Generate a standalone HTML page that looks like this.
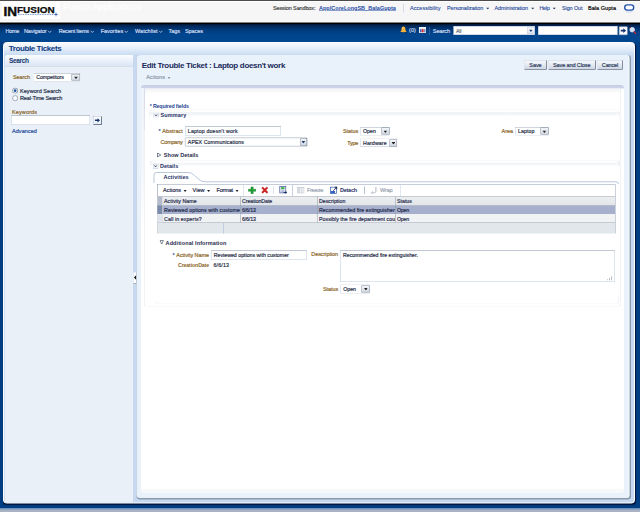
<!DOCTYPE html>
<html lang="en">
<head>
<meta charset="utf-8">
<title>Trouble Tickets</title>
<style>
html,body{margin:0;padding:0;width:640px;height:512px;overflow:hidden;background:#003d82}
#root{position:absolute;left:0;top:0;width:1280px;height:1024px;transform:scale(.5);transform-origin:0 0;overflow:hidden;font-family:"Liberation Sans",sans-serif;background:#003d82}
#root div,#root span,#root svg{position:absolute;box-sizing:border-box}
#root span{white-space:nowrap;-webkit-text-stroke:.35px currentColor}
#root span.b{font-weight:bold;-webkit-text-stroke:0}
.inp{background:#fff;border:1.2px solid #bccbdd;border-top-color:#8493a9}
.sel{background:#fff;border:1.2px solid #afbdd0;border-top-color:#7f8da3;border-radius:2px}
.ddb{background:linear-gradient(#f4f6f9,#cfd6e0);border:1px solid #7f8a9c}
.btn{background:linear-gradient(#f6f8fb,#e6ebf2 50%,#cfd6e2);border:1px solid #d3dae4;border-right:2px solid #848da0;border-bottom:2px solid #8a93a5;border-radius:2px}

</style>
</head>
<body>
<div id="root">
<div style="left:0px;top:0px;width:1280px;height:46px;background:#fff"></div>
<div style="left:0px;top:4.4px;width:1280px;height:38.6px;background:#f6f6f6"></div>
<div style="left:0px;top:0px;width:1280px;height:1.5px;background:#4c4c4c"></div>
<span style="left:126px;top:3.4px;font-size:18px;line-height:22px;color:#ffffff;letter-spacing:0.05px;">Fusion Applications</span>
<div style="left:4px;top:4.4px;width:116px;height:33.2px;background:#fff"></div>
<span class="b" style="left:7px;top:10.9px;font-size:24px;line-height:24px;color:#0c0c0c;-webkit-text-stroke:.8px #0c0c0c;transform:scaleX(1.13);transform-origin:0 0">IN</span>
<span class="b" style="left:34.4px;top:11.8px;font-size:17px;line-height:17px;color:#0c0c0c;-webkit-text-stroke:.5px #0c0c0c;transform:scaleX(1.17);transform-origin:0 0">FUSION</span>
<svg style="left:36px;top:24.4px" width="84" height="10" viewBox="0 0 84 10"><line x1="0" y1="5" x2="72" y2="5" stroke="#5b86c4" stroke-width="1.8" stroke-dasharray="1.8 1.6"/><path d="M76 -1 L77 3.8 L81 5 L77 6.2 L76 10 L75 6.2 L71 5 L75 3.8Z" fill="#2c5fa8"/></svg>
<span style="left:546px;top:9.8px;font-size:11px;line-height:13px;color:#444;letter-spacing:-0.25px;">Session Sandbox:</span>
<span class="b" style="left:638px;top:9.8px;font-size:11px;line-height:13px;color:#1d49a3;letter-spacing:0.04px;text-decoration:underline">ApplCoreLongSB_BalaGupta</span>
<div style="left:806px;top:8px;width:1.2px;height:16.8px;background:#b4bfd8"></div>
<span style="left:820px;top:9.8px;font-size:11px;line-height:13px;color:#23479a;letter-spacing:0.08px;-webkit-text-stroke-width:.2px">Accessibility</span>
<span style="left:894px;top:9.8px;font-size:11px;line-height:13px;color:#23479a;letter-spacing:-0.20px;-webkit-text-stroke-width:.2px">Personalization</span>
<span style="left:989px;top:9.8px;font-size:11px;line-height:13px;color:#23479a;letter-spacing:-0.21px;-webkit-text-stroke-width:.2px">Administration</span>
<span style="left:1079px;top:9.8px;font-size:11px;line-height:13px;color:#23479a;letter-spacing:-0.75px;-webkit-text-stroke-width:.2px">Help</span>
<span style="left:1124px;top:9.8px;font-size:11px;line-height:13px;color:#23479a;letter-spacing:-0.25px;-webkit-text-stroke-width:.2px">Sign Out</span>
<span style="left:1176px;top:9.8px;font-size:11px;line-height:13px;color:#000;letter-spacing:0.10px;">Bala Gupta</span>
<svg style="left:972px;top:15.2px" width="7" height="4" viewBox="0 0 7 4"><path d="M0 0H7L3.5 4Z" fill="#2c3f66"/></svg>
<svg style="left:1062px;top:15.2px" width="7" height="4" viewBox="0 0 7 4"><path d="M0 0H7L3.5 4Z" fill="#2c3f66"/></svg>
<svg style="left:1105px;top:15.2px" width="7" height="4" viewBox="0 0 7 4"><path d="M0 0H7L3.5 4Z" fill="#2c3f66"/></svg>
<svg style="left:1246px;top:6.4px" width="26" height="22" viewBox="0 0 26 22"><rect x="1" y="1" width="22.8" height="16" rx="8" fill="#fbfbfb"/><rect x="3.4" y="3.8" width="18" height="10.4" rx="5.2" ry="5.2" fill="#fff" stroke="#1f4fae" stroke-width="2.7"/><path d="M6 17.2Q12.4 19.6 18.8 17.2" fill="none" stroke="#b9cdea" stroke-width="1.6"/></svg>
<div style="left:0px;top:45.2px;width:1280px;height:4.8px;background:linear-gradient(#000 0,#000 45%,#001b40 100%)"></div>
<div style="left:0px;top:48.6px;width:1280px;height:35.4px;background:linear-gradient(#001f49 0,#003a7c 30%,#00468f 60%,#00468f 100%)"></div>
<span style="left:11px;top:55.5px;font-size:11px;line-height:13px;color:#d3dff2;letter-spacing:-0.50px;">Home</span>
<span style="left:48px;top:55.5px;font-size:11px;line-height:13px;color:#d3dff2;letter-spacing:-0.22px;">Navigator</span>
<svg style="left:95.4px;top:59px" width="9" height="9" viewBox="0 0 9 9"><path d="M1.2 2.6L4.5 6L7.8 2.6" fill="none" stroke="#cfdcf0" stroke-width="1.5"/></svg>
<span style="left:117.4px;top:55.5px;font-size:11px;line-height:13px;color:#d3dff2;letter-spacing:-0.37px;">Recent Items</span>
<svg style="left:180.4px;top:59px" width="9" height="9" viewBox="0 0 9 9"><path d="M1.2 2.6L4.5 6L7.8 2.6" fill="none" stroke="#cfdcf0" stroke-width="1.5"/></svg>
<span style="left:201.4px;top:55.5px;font-size:11px;line-height:13px;color:#d3dff2;letter-spacing:-0.04px;">Favorites</span>
<svg style="left:248px;top:59px" width="9" height="9" viewBox="0 0 9 9"><path d="M1.2 2.6L4.5 6L7.8 2.6" fill="none" stroke="#cfdcf0" stroke-width="1.5"/></svg>
<span style="left:270px;top:55.5px;font-size:11px;line-height:13px;color:#d3dff2;letter-spacing:0.11px;">Watchlist</span>
<svg style="left:316.8px;top:59px" width="9" height="9" viewBox="0 0 9 9"><path d="M1.2 2.6L4.5 6L7.8 2.6" fill="none" stroke="#cfdcf0" stroke-width="1.5"/></svg>
<span style="left:336.8px;top:55.5px;font-size:11px;line-height:13px;color:#d3dff2;letter-spacing:0.05px;">Tags</span>
<span style="left:370px;top:55.5px;font-size:11px;line-height:13px;color:#d3dff2;letter-spacing:-0.17px;">Spaces</span>
<svg style="left:798.6px;top:52.4px" width="16.8" height="16.8" viewBox="0 0 16.8 16.8"><path d="M8 1C5.2 1 4.2 3.4 4.2 6C4.2 9 3 10.6 1.2 12.2H14.8C13 10.6 11.8 9 11.8 6C11.8 3.4 10.8 1 8 1Z" fill="#f8b23a"/><path d="M6.4 12.6a1.7 1.7 0 0 0 3.2 0Z" fill="#e58d0a"/><path d="M7 2.2C5.8 2.8 5.4 4.6 5.4 6.4" stroke="#fde2a4" stroke-width="1.2" fill="none"/></svg>
<span style="left:818px;top:53.3px;font-size:10.5px;line-height:13px;color:#d3dff2;letter-spacing:0.33px;">(0)</span>
<svg style="left:838px;top:54px" width="14.4" height="12.4" viewBox="0 0 14.4 12.4"><rect x="0" y="0" width="14.4" height="12.4" fill="#dfe5ee"/><rect x="0.6" y="0.6" width="13.2" height="2.6" fill="#f4f6fa"/><rect x="2" y="4.4" width="3" height="6" fill="#3f63b4"/><rect x="5.6" y="4.4" width="3.6" height="6" fill="#e0262d"/><rect x="9.8" y="4.4" width="3" height="6" fill="#7f90b8"/></svg>
<div style="left:858.6px;top:54px;width:1.2px;height:16px;background:#4f7fbd"></div>
<span style="left:865.5px;top:55.0px;font-size:11.5px;line-height:14px;color:#d3dff2;letter-spacing:-0.33px;">Search</span>
<div style="left:907px;top:52px;width:163.4px;height:17.8px;background:#fff;border:1px solid #9fb0c8"></div>
<span style="left:912px;top:54.7px;font-size:10.5px;line-height:13px;color:#666e7c;letter-spacing:-0.33px;">All</span>
<div style="left:1054px;top:54.8px;width:14.6px;height:13px;background:linear-gradient(#fbfcfe,#d5dfee);border:1px solid #b9c6da"></div>
<svg style="left:1057.6px;top:59.2px" width="7.6" height="4.8" viewBox="0 0 7.6 4.8"><path d="M0 0H7.6L3.8 4.8Z" fill="#1f3a72"/></svg>
<div style="left:1076.4px;top:52.4px;width:158.2px;height:17.4px;background:#fff;border:1px solid #9fb0c8"></div>
<div style="left:1238px;top:53.4px;width:16.8px;height:16.4px;background:#fff;border:1px solid #aab6c8;border-radius:1px"></div>
<svg style="left:1240.8px;top:56.4px" width="11.6" height="10.4" viewBox="0 0 11.6 10.4"><path d="M0 3.6H5.6V0.6L11.2 5.2L5.6 9.8V6.8H0Z" fill="#15346f"/></svg>
<svg style="left:1258px;top:53.2px" width="15.2" height="16" viewBox="0 0 15.2 16"><circle cx="6.4" cy="6.4" r="4.6" fill="#cfe4f7" stroke="#e8eef6" stroke-width="1.6"/><path d="M9.4 9.6L14 15" stroke="#c8242a" stroke-width="2.4"/><path d="M1 1l3 1.5" stroke="#c8242a" stroke-width="1.6"/></svg>
<div style="left:0px;top:1016.8px;width:1280px;height:2.4px;background:#dde4ee"></div>
<div style="left:0px;top:1019px;width:1280px;height:5px;background:#a9b3c3"></div>
<div style="left:5.6px;top:83.6px;width:1264.8px;height:923.4px;background:#c6d9f0;border:2.6px solid #fff;border-radius:7px;box-shadow:1.6px 2.4px 1.5px #00163c"></div>
<div style="left:8px;top:86px;width:1260px;height:24.4px;background:linear-gradient(#f7fafd 0,#e6eef9 45%,#c9dcf2 100%);border-radius:5px 5px 0 0"></div>
<span class="b" style="left:17.4px;top:86.9px;font-size:16px;line-height:19px;color:#0b377f;letter-spacing:-0.80px;">Trouble Tickets</span>
<div style="left:8.8px;top:110px;width:258px;height:894.6px;background:#e9f0f8;border-left:1.6px solid #c4d5ec;border-right:1px solid #b9c7da;border-radius:5px 0 0 3px"></div>
<div style="left:10.4px;top:110px;width:256px;height:22.8px;background:linear-gradient(#fbfdff 0,#eaf1fa 50%,#dbe7f5 100%);border-bottom:1.8px solid #a3aebf;border-radius:5px 0 0 0"></div>
<span class="b" style="left:18px;top:112.8px;font-size:13px;line-height:16px;color:#14366f;letter-spacing:-0.73px;">Search</span>
<span style="left:26px;top:148.1px;font-size:11px;line-height:13px;color:#8b6426;letter-spacing:-0.17px;">Search</span>
<div class="sel" style="left:66.6px;top:146.4px;width:94.6px;height:16.4px;"></div>
<span style="left:72.4px;top:148.1px;font-size:10.5px;line-height:13px;color:#222c44;letter-spacing:-0.13px;">Competitors</span>
<div class="ddb" style="left:142.6px;top:148px;width:17.4px;height:13.4px;"></div>
<svg style="left:147.6px;top:152.8px" width="8" height="5.2" viewBox="0 0 8 5.2"><path d="M0 0H8L4 5.2Z" fill="#222"/></svg>
<svg style="left:23.6px;top:174.6px" width="12.8" height="12.8" viewBox="0 0 12.8 12.8"><circle cx="6.4" cy="6.4" r="5.2" fill="#f4f7fb" stroke="#7d899d" stroke-width="1.6"/><circle cx="6.4" cy="6.4" r="2.7" fill="#1f55a8"/></svg>
<svg style="left:23.6px;top:190.4px" width="12.8" height="12.8" viewBox="0 0 12.8 12.8"><circle cx="6.4" cy="6.4" r="5.2" fill="#fafbfd" stroke="#8f9aad" stroke-width="1.6"/></svg>
<span style="left:40px;top:174.5px;font-size:11px;line-height:13px;color:#222c44;letter-spacing:0.11px;">Keyword Search</span>
<span style="left:40px;top:190.3px;font-size:11px;line-height:13px;color:#222c44;letter-spacing:-0.25px;">Real-Time Search</span>
<span style="left:24px;top:216.9px;font-size:11px;line-height:13px;color:#8b6426;letter-spacing:0.25px;">Keywords</span>
<div class="inp" style="left:22.4px;top:231.2px;width:157.6px;height:17.6px;"></div>
<div class="btn" style="left:186px;top:232.2px;width:18px;height:17.8px;border-radius:2px;background:linear-gradient(#fdfeff,#e6edf6);border-color:#aab6c8;border-right-color:#6f7c92;border-bottom-color:#6f7c92"></div>
<svg style="left:189.6px;top:236.4px" width="10.4" height="9.2" viewBox="0 0 10.4 9.2"><path d="M0 3.2H5V0.4L10.2 4.6L5 8.8V6H0Z" fill="#15346f"/></svg>
<span style="left:24px;top:255.9px;font-size:11px;line-height:13px;color:#1d4a98;letter-spacing:0.12px;">Advanced</span>
<div style="left:267.2px;top:544.8px;width:6.8px;height:22px;background:#fff;border-right:1.6px solid #4a4f5a;border-bottom:1.4px solid #6b7280"></div>
<svg style="left:268px;top:550.4px" width="4.8" height="10" viewBox="0 0 4.8 10"><path d="M4.6 0V10L0 5Z" fill="#111"/></svg>
<div style="left:272.6px;top:110.4px;width:989.4px;height:888.4px;background:#8b9aab;border-radius:7px"></div>
<div style="left:272.6px;top:110.4px;width:986px;height:885.6px;background:#e9f1fa;border-radius:7px 6px 6px 7px;box-shadow:inset -2px 0 0 #f3fbfc"></div>
<span class="b" style="left:283.4px;top:120.1px;font-size:16px;line-height:19px;color:#1b2a5c;letter-spacing:-0.64px;">Edit Trouble Ticket : Laptop doesn&#39;t work</span>
<span style="left:292.6px;top:148.3px;font-size:11px;line-height:13px;color:#8c97a8;letter-spacing:0.20px;">Actions</span>
<svg style="left:334.8px;top:153.6px" width="6.4" height="4" viewBox="0 0 6.4 4"><path d="M0 0H6.4L3.2 4Z" fill="#8c97a8"/></svg>
<div class="btn" style="left:1048.4px;top:119.6px;width:45.6px;height:20.4px;"></div>
<span style="left:1058.6px;top:122.9px;font-size:11px;line-height:13px;color:#27365a;letter-spacing:-0.10px;">Save</span>
<div class="btn" style="left:1096px;top:119.6px;width:96px;height:20.4px;"></div>
<span style="left:1106px;top:122.9px;font-size:11px;line-height:13px;color:#27365a;letter-spacing:-0.21px;">Save and Close</span>
<div class="btn" style="left:1193.6px;top:119.6px;width:52.4px;height:20.4px;"></div>
<span style="left:1203.6px;top:122.9px;font-size:11px;line-height:13px;color:#27365a;letter-spacing:-0.27px;">Cancel</span>
<div style="left:282px;top:170px;width:965.6px;height:815.2px;background:#fff;border-radius:6px"></div>
<div style="left:282px;top:170px;width:965.6px;height:8.8px;background:linear-gradient(#c5cee3 0,#cbd4e7 60%,#eef1f7 85%,#fff 100%);border-radius:6px 6px 0 0"></div>
<div style="left:282px;top:176px;width:6.8px;height:284px;background:linear-gradient(#eff4fa,#f3f6fb 60%,#fff)"></div>
<div style="left:288.4px;top:176.8px;width:953.4px;height:436.4px;background:linear-gradient(#f2f3f5 0,#f7f7f8 4px,#fff 11px);border:1px solid #e3e7ed;border-top:none;border-radius:0 0 5px 5px"></div>
<div style="left:288.4px;top:176.8px;width:1.6px;height:83.2px;background:linear-gradient(#d6daeb,#e3e7ed)"></div>
<div style="left:282px;top:978.4px;width:965.6px;height:6.8px;background:#f7f8f9;border-radius:0 0 6px 6px"></div>
<span class="b" style="left:299.4px;top:205.9px;font-size:10.5px;line-height:13px;color:#1f3f92;letter-spacing:-0.28px;">* Required fields</span>
<div style="left:298.6px;top:218.8px;width:941px;height:25.2px;border:1px solid transparent;border-top:1.8px solid #bccadd;border-radius:6px 6px 0 0"></div>
<div style="left:298.6px;top:223px;width:1px;height:19px;background:linear-gradient(#d5dde9,#fff)"></div>
<div style="left:1238.6px;top:223px;width:1px;height:19px;background:linear-gradient(#d5dde9,#fff)"></div>
<div style="left:299.6px;top:220px;width:940px;height:12px;background:linear-gradient(#fff 0,#fff 25%,#f1f3f6 40%,#f4f6f8 80%,#fff 100%);border-radius:6px 6px 0 0"></div>
<div style="left:306.2px;top:224.8px;width:11.4px;height:10.4px;background:#eef1f6;border:1.2px solid #bcc6d5;border-right-color:#939eb2;border-bottom-color:#939eb2;border-radius:1.5px"></div>
<svg style="left:308.6px;top:227.6px" width="6.4" height="5" viewBox="0 0 6.4 5"><path d="M0.6 0.8L3.2 3.8L5.8 0.8" fill="none" stroke="#2c3650" stroke-width="1.7"/></svg>
<span class="b" style="left:321.2px;top:223.5px;font-size:11px;line-height:13px;color:#1a3068;letter-spacing:0.20px;">Summary</span>
<span class="b" style="left:316.8px;top:256.3px;font-size:11px;line-height:13px;color:#2a4fa8;letter-spacing:0.40px;">*</span>
<span style="left:324.6px;top:255.5px;font-size:11px;line-height:13px;color:#8b6426;letter-spacing:0.12px;">Abstract</span>
<div class="inp" style="left:370px;top:252.6px;width:191.8px;height:18.4px;"></div>
<span style="left:375.6px;top:255.5px;font-size:10.5px;line-height:13px;color:#222c44;letter-spacing:0.32px;">Laptop doesn&#39;t work</span>
<span style="left:321.2px;top:277.9px;font-size:11px;line-height:13px;color:#8b6426;letter-spacing:-0.46px;">Company</span>
<div class="sel" style="left:370px;top:274.8px;width:244.8px;height:18.4px;border-color:#8e9aac"></div>
<span style="left:375.6px;top:277.9px;font-size:10.5px;line-height:13px;color:#222c44;letter-spacing:0.18px;">APEX Communications</span>
<div class="ddb" style="left:600.6px;top:276.4px;width:13px;height:15.2px;"></div>
<svg style="left:603.4px;top:281.6px" width="7.6" height="5.2" viewBox="0 0 7.6 5.2"><path d="M0 0H7.6L3.8 5.2Z" fill="#1f3a72"/></svg>
<span style="left:685.8px;top:255.9px;font-size:11px;line-height:13px;color:#8b6426;letter-spacing:-0.07px;">Status</span>
<div class="sel" style="left:720px;top:253.8px;width:59.6px;height:16.8px;"></div>
<span style="left:726px;top:255.9px;font-size:10.5px;line-height:13px;color:#222c44;letter-spacing:0.00px;">Open</span>
<div class="ddb" style="left:763px;top:255.4px;width:15.6px;height:13.8px;"></div>
<svg style="left:767.2px;top:260.8px" width="7.6" height="4.8" viewBox="0 0 7.6 4.8"><path d="M0 0H7.6L3.8 4.8Z" fill="#222"/></svg>
<span style="left:694.6px;top:279.5px;font-size:11px;line-height:13px;color:#8b6426;letter-spacing:-0.55px;">Type</span>
<div class="sel" style="left:720px;top:277.4px;width:75.2px;height:16.6px;"></div>
<span style="left:726px;top:279.5px;font-size:10.5px;line-height:13px;color:#222c44;letter-spacing:0.25px;">Hardware</span>
<div class="ddb" style="left:778.8px;top:279px;width:15.4px;height:13.6px;"></div>
<svg style="left:782.8px;top:284.4px" width="7.6" height="4.8" viewBox="0 0 7.6 4.8"><path d="M0 0H7.6L3.8 4.8Z" fill="#222"/></svg>
<span style="left:1003.2px;top:255.9px;font-size:11px;line-height:13px;color:#8b6426;letter-spacing:-0.05px;">Area</span>
<div class="sel" style="left:1030px;top:253.8px;width:67.8px;height:16.8px;"></div>
<span style="left:1036px;top:255.9px;font-size:10.5px;line-height:13px;color:#222c44;letter-spacing:0.13px;">Laptop</span>
<div class="ddb" style="left:1081.2px;top:255.4px;width:15.6px;height:13.8px;"></div>
<svg style="left:1085.2px;top:260.8px" width="7.6" height="4.8" viewBox="0 0 7.6 4.8"><path d="M0 0H7.6L3.8 4.8Z" fill="#222"/></svg>
<svg style="left:314.4px;top:304.8px" width="8.8" height="10" viewBox="0 0 8.8 10"><path d="M1 1L7.6 5L1 9Z" fill="#fff" stroke="#333c52" stroke-width="1.3"/></svg>
<span class="b" style="left:327.6px;top:303.1px;font-size:11px;line-height:13px;color:#1f2a4c;letter-spacing:0.07px;">Show Details</span>
<div style="left:299.6px;top:320.6px;width:940px;height:11.4px;background:linear-gradient(#fff 0,#fff 25%,#f1f3f6 45%,#f4f6f8 80%,#fff 100%);border-top:1.8px solid #bccadd;border-right:1px solid #dde4ee;border-radius:6px 6px 0 0"></div>
<div style="left:306px;top:327.6px;width:11.4px;height:10.4px;background:#eef1f6;border:1.2px solid #bcc6d5;border-right-color:#939eb2;border-bottom-color:#939eb2;border-radius:1.5px"></div>
<svg style="left:308.4px;top:330.4px" width="6.4" height="5" viewBox="0 0 6.4 5"><path d="M0.6 0.8L3.2 3.8L5.8 0.8" fill="none" stroke="#2c3650" stroke-width="1.7"/></svg>
<span class="b" style="left:320px;top:325.9px;font-size:11px;line-height:13px;color:#1a3068;letter-spacing:0.06px;">Details</span>
<svg style="left:306px;top:342px" width="934" height="26" viewBox="0 0 934 26"><path d="M2 24V8Q2 3 7 3H70Q78 3 83 9L92 17Q97 21.6 104 21.6H926Q931 21.6 931 26" fill="none" stroke="#b9c7db" stroke-width="2"/></svg>
<span class="b" style="left:326.8px;top:348.3px;font-size:11px;line-height:13px;color:#1a3068;letter-spacing:0.18px;">Activities</span>
<div style="left:314px;top:368.4px;width:917.2px;height:98.8px;background:#fff;border:1.2px solid #79859a;border-top-color:#8f9aae;border-bottom:none;border-right-color:#98a3b4"></div>
<div style="left:315.2px;top:444.8px;width:914.8px;height:22.4px;background:#e1e7ea"></div>
<div style="left:315.2px;top:444.4px;width:914.8px;height:1.2px;background:#9aa3b0"></div>
<div style="left:445.6px;top:445.6px;width:1.2px;height:21.2px;background:#9db4dc"></div>
<span style="left:326px;top:373.9px;font-size:11px;line-height:13px;color:#1f2a4c;letter-spacing:0.00px;">Actions</span>
<span style="left:385px;top:373.9px;font-size:11px;line-height:13px;color:#1f2a4c;letter-spacing:0.15px;">View</span>
<span style="left:433px;top:373.9px;font-size:11px;line-height:13px;color:#1f2a4c;letter-spacing:-0.33px;">Format</span>
<svg style="left:367.2px;top:379.6px" width="6.4" height="4" viewBox="0 0 6.4 4"><path d="M0 0H6.4L3.2 4Z" fill="#222"/></svg>
<svg style="left:414.4px;top:379.6px" width="6.4" height="4" viewBox="0 0 6.4 4"><path d="M0 0H6.4L3.2 4Z" fill="#222"/></svg>
<svg style="left:470.8px;top:379.6px" width="6.4" height="4" viewBox="0 0 6.4 4"><path d="M0 0H6.4L3.2 4Z" fill="#222"/></svg>
<div style="left:487px;top:370px;width:1.2px;height:22px;background:#c5cfe0"></div>
<div style="left:545.6px;top:373.2px;width:1.2px;height:14.8px;background:#b5bfd0"></div>
<div style="left:584.4px;top:370px;width:1.2px;height:22px;background:#c5cfe0"></div>
<div style="left:728.4px;top:373.2px;width:1.2px;height:14.8px;background:#b5bfd0"></div>
<div style="left:800px;top:369.2px;width:1.2px;height:22.8px;background:#c5cfe0"></div>
<svg style="left:496px;top:372.8px" width="16.4" height="14.8" viewBox="0 0 16.4 14.8"><path d="M6 0.6H10.4V5.4H15.6V9.6H10.4V14.4H6V9.6H0.8V5.4H6Z" fill="#21a038" stroke="#0f7a24" stroke-width="0.8"/></svg>
<svg style="left:521.6px;top:373.2px" width="15.2" height="14.4" viewBox="0 0 15.2 14.4"><path d="M1.2 3L3.6 0.8L7.6 4.6L11.6 0.8L14 3L10 7.2L14 11.4L11.6 13.6L7.6 9.8L3.6 13.6L1.2 11.4L5.2 7.2Z" fill="#d6201f" stroke="#a31010" stroke-width="0.7"/></svg>
<svg style="left:558px;top:372px" width="16.8" height="16.4" viewBox="0 0 16.8 16.4"><rect x="1.6" y="0.8" width="12" height="13" fill="#f4f7fb" stroke="#38509a" stroke-width="1.4"/><rect x="4" y="2.4" width="7" height="4" fill="#3fae49"/><path d="M3.4 8.6H11.6M3.4 11H11.6M7.4 7V13" stroke="#8b9bc8" stroke-width="1"/><path d="M9 12.2H13V10L16.4 13L13 16V13.8H9Z" fill="#1d2f6b"/></svg>
<svg style="left:594.4px;top:374.4px" width="14.8" height="12.8" viewBox="0 0 14.8 12.8"><rect x="0.6" y="0.6" width="13.6" height="11.6" fill="#f2f3f5" stroke="#b9bfc8" stroke-width="1.2"/><path d="M5 0.6V12.2M9.6 0.6V12.2" stroke="#b9bfc8" stroke-width="1.2"/><rect x="1.2" y="1.2" width="3.4" height="10.4" fill="#d9dde3"/></svg>
<span style="left:614px;top:373.9px;font-size:11px;line-height:13px;color:#98a2b0;letter-spacing:-0.33px;">Freeze</span>
<svg style="left:660.4px;top:372.4px" width="16" height="16" viewBox="0 0 16 16"><rect x="0.8" y="2.4" width="12.4" height="12.6" fill="#fdfdfe" stroke="#3d62b3" stroke-width="1.5"/><rect x="1.6" y="10" width="8.4" height="4.4" fill="#2f62c4"/><path d="M6.4 9.4L12 3.8" stroke="#1a2550" stroke-width="1.8"/><path d="M9 1.4H14.4V6.8Z" fill="#1a2550"/></svg>
<span class="b" style="left:680px;top:373.9px;font-size:11px;line-height:13px;color:#1d2f63;letter-spacing:-0.50px;">Detach</span>
<svg style="left:741.2px;top:372.8px" width="14" height="15.2" viewBox="0 0 14 15.2"><path d="M10.6 1V9.6Q10.6 12.6 7.4 12.6H3.6" fill="none" stroke="#aab1bd" stroke-width="1.6"/><path d="M5 9.4L1.2 12.6L5 15" fill="none" stroke="#aab1bd" stroke-width="1.4"/><path d="M13 1V11" stroke="#c9ced6" stroke-width="1.2"/></svg>
<span style="left:760px;top:373.9px;font-size:11px;line-height:13px;color:#98a2b0;letter-spacing:-0.25px;">Wrap</span>
<div style="left:315.2px;top:392px;width:914.8px;height:19.2px;background:linear-gradient(#eceef0,#e3e6e9);border-top:1.2px solid #99a2b0;border-bottom:1.2px solid #858e9d"></div>
<div style="left:315.2px;top:392.8px;width:8.8px;height:18px;background:#b4bccb"></div>
<span style="left:328px;top:395.5px;font-size:10.5px;line-height:13px;color:#1f2a4c;letter-spacing:0.09px;">Activity Name</span>
<span style="left:484px;top:395.5px;font-size:10.5px;line-height:13px;color:#1f2a4c;letter-spacing:-0.12px;">CreationDate</span>
<span style="left:638px;top:395.5px;font-size:10.5px;line-height:13px;color:#1f2a4c;letter-spacing:0.02px;">Description</span>
<span style="left:794px;top:395.5px;font-size:10.5px;line-height:13px;color:#1f2a4c;letter-spacing:0.00px;">Status</span>
<div style="left:315.2px;top:411.2px;width:914.8px;height:17.2px;background:#a6afcb"></div>
<div style="left:315.2px;top:411.2px;width:8.8px;height:17.2px;background:#7d8bab"></div>
<span style="left:328px;top:413.5px;font-size:10.5px;line-height:13px;color:#1f2a4c;letter-spacing:0.17px;width:152.4px;overflow:hidden">Reviewed options with customer</span>
<span style="left:484px;top:413.5px;font-size:10.5px;line-height:13px;color:#1f2a4c;letter-spacing:-0.30px;">6/6/13</span>
<span style="left:638px;top:413.5px;font-size:10.5px;line-height:13px;color:#1f2a4c;letter-spacing:0.11px;">Recommended fire extinguisher</span>
<span style="left:794px;top:413.5px;font-size:10.5px;line-height:13px;color:#1f2a4c;letter-spacing:-0.50px;">Open</span>
<div style="left:315.2px;top:428.4px;width:914.8px;height:16.4px;background:#f1f2f4"></div>
<div style="left:315.2px;top:428.8px;width:8.8px;height:16px;background:#dfe3ea"></div>
<span style="left:328px;top:430.5px;font-size:10.5px;line-height:13px;color:#1f2a4c;letter-spacing:0.19px;">Call in experts?</span>
<span style="left:484px;top:430.5px;font-size:10.5px;line-height:13px;color:#1f2a4c;letter-spacing:-0.30px;">6/6/13</span>
<span style="left:638px;top:430.5px;font-size:10.5px;line-height:13px;color:#1f2a4c;letter-spacing:0.07px;width:152px;overflow:hidden">Possibly the fire department could</span>
<span style="left:794px;top:430.5px;font-size:10.5px;line-height:13px;color:#1f2a4c;letter-spacing:-0.50px;">Open</span>
<div style="left:480.8px;top:392.8px;width:1px;height:52px;background:#8f98a6"></div>
<div style="left:634.8px;top:392.8px;width:1px;height:52px;background:#8f98a6"></div>
<div style="left:790.4px;top:392.8px;width:1px;height:52px;background:#8f98a6"></div>
<div style="left:324px;top:392.8px;width:1px;height:52px;background:#c8ced8"></div>
<svg style="left:319.2px;top:480.4px" width="8.8" height="9.2" viewBox="0 0 8.8 9.2"><path d="M1 1H7.8L4.4 8Z" fill="#fff" stroke="#333c52" stroke-width="1.2"/></svg>
<span class="b" style="left:331.2px;top:478.5px;font-size:11px;line-height:13px;color:#1f2a4c;letter-spacing:0.19px;">Additional Information</span>
<span class="b" style="left:344.8px;top:504.3px;font-size:11px;line-height:13px;color:#2a4fa8;letter-spacing:0.40px;">*</span>
<span style="left:352.6px;top:503.5px;font-size:11px;line-height:13px;color:#8b6426;letter-spacing:-0.15px;">Activity Name</span>
<div class="inp" style="left:422px;top:501px;width:192px;height:18.2px;"></div>
<span style="left:427.6px;top:503.5px;font-size:10.5px;line-height:13px;color:#222c44;letter-spacing:-0.02px;">Reviewed options with customer</span>
<span class="b" style="left:356px;top:524.1px;font-size:10.5px;line-height:13px;color:#8b6426;letter-spacing:-0.28px;">CreationDate</span>
<span style="left:427px;top:524.1px;font-size:10.5px;line-height:13px;color:#222c44;letter-spacing:0.33px;">6/6/13</span>
<span style="left:622.6px;top:500.7px;font-size:11px;line-height:13px;color:#8b6426;letter-spacing:-0.15px;">Description</span>
<div class="inp" style="left:680.4px;top:501px;width:549.2px;height:62.2px;"></div>
<span style="left:686px;top:504.3px;font-size:10.5px;line-height:13px;color:#222c44;letter-spacing:-0.03px;">Recommended fire extinguisher.</span>
<svg style="left:1213.2px;top:550.8px" width="12.8" height="10.4" viewBox="0 0 12.8 10.4"><path d="M2 10V7.6M6 10V4.6M10 10V1.6" stroke="#a7b0bd" stroke-width="1.6"/></svg>
<span style="left:646px;top:571.5px;font-size:11px;line-height:13px;color:#8b6426;letter-spacing:-0.17px;">Status</span>
<div class="sel" style="left:680.4px;top:569.2px;width:59.8px;height:17.4px;"></div>
<span style="left:686.4px;top:571.5px;font-size:10.5px;line-height:13px;color:#222c44;letter-spacing:0.00px;">Open</span>
<div class="ddb" style="left:723.2px;top:570.8px;width:16px;height:14.4px;"></div>
<svg style="left:727.6px;top:576.4px" width="7.6" height="4.8" viewBox="0 0 7.6 4.8"><path d="M0 0H7.6L3.8 4.8Z" fill="#222"/></svg>
<div style="left:310px;top:590px;width:927.6px;height:17.2px;border-bottom:1px solid #cfd9e6;border-right:1px solid #dfe6ef;border-radius:0 0 6px 6px"></div>
</div>
</body>
</html>
